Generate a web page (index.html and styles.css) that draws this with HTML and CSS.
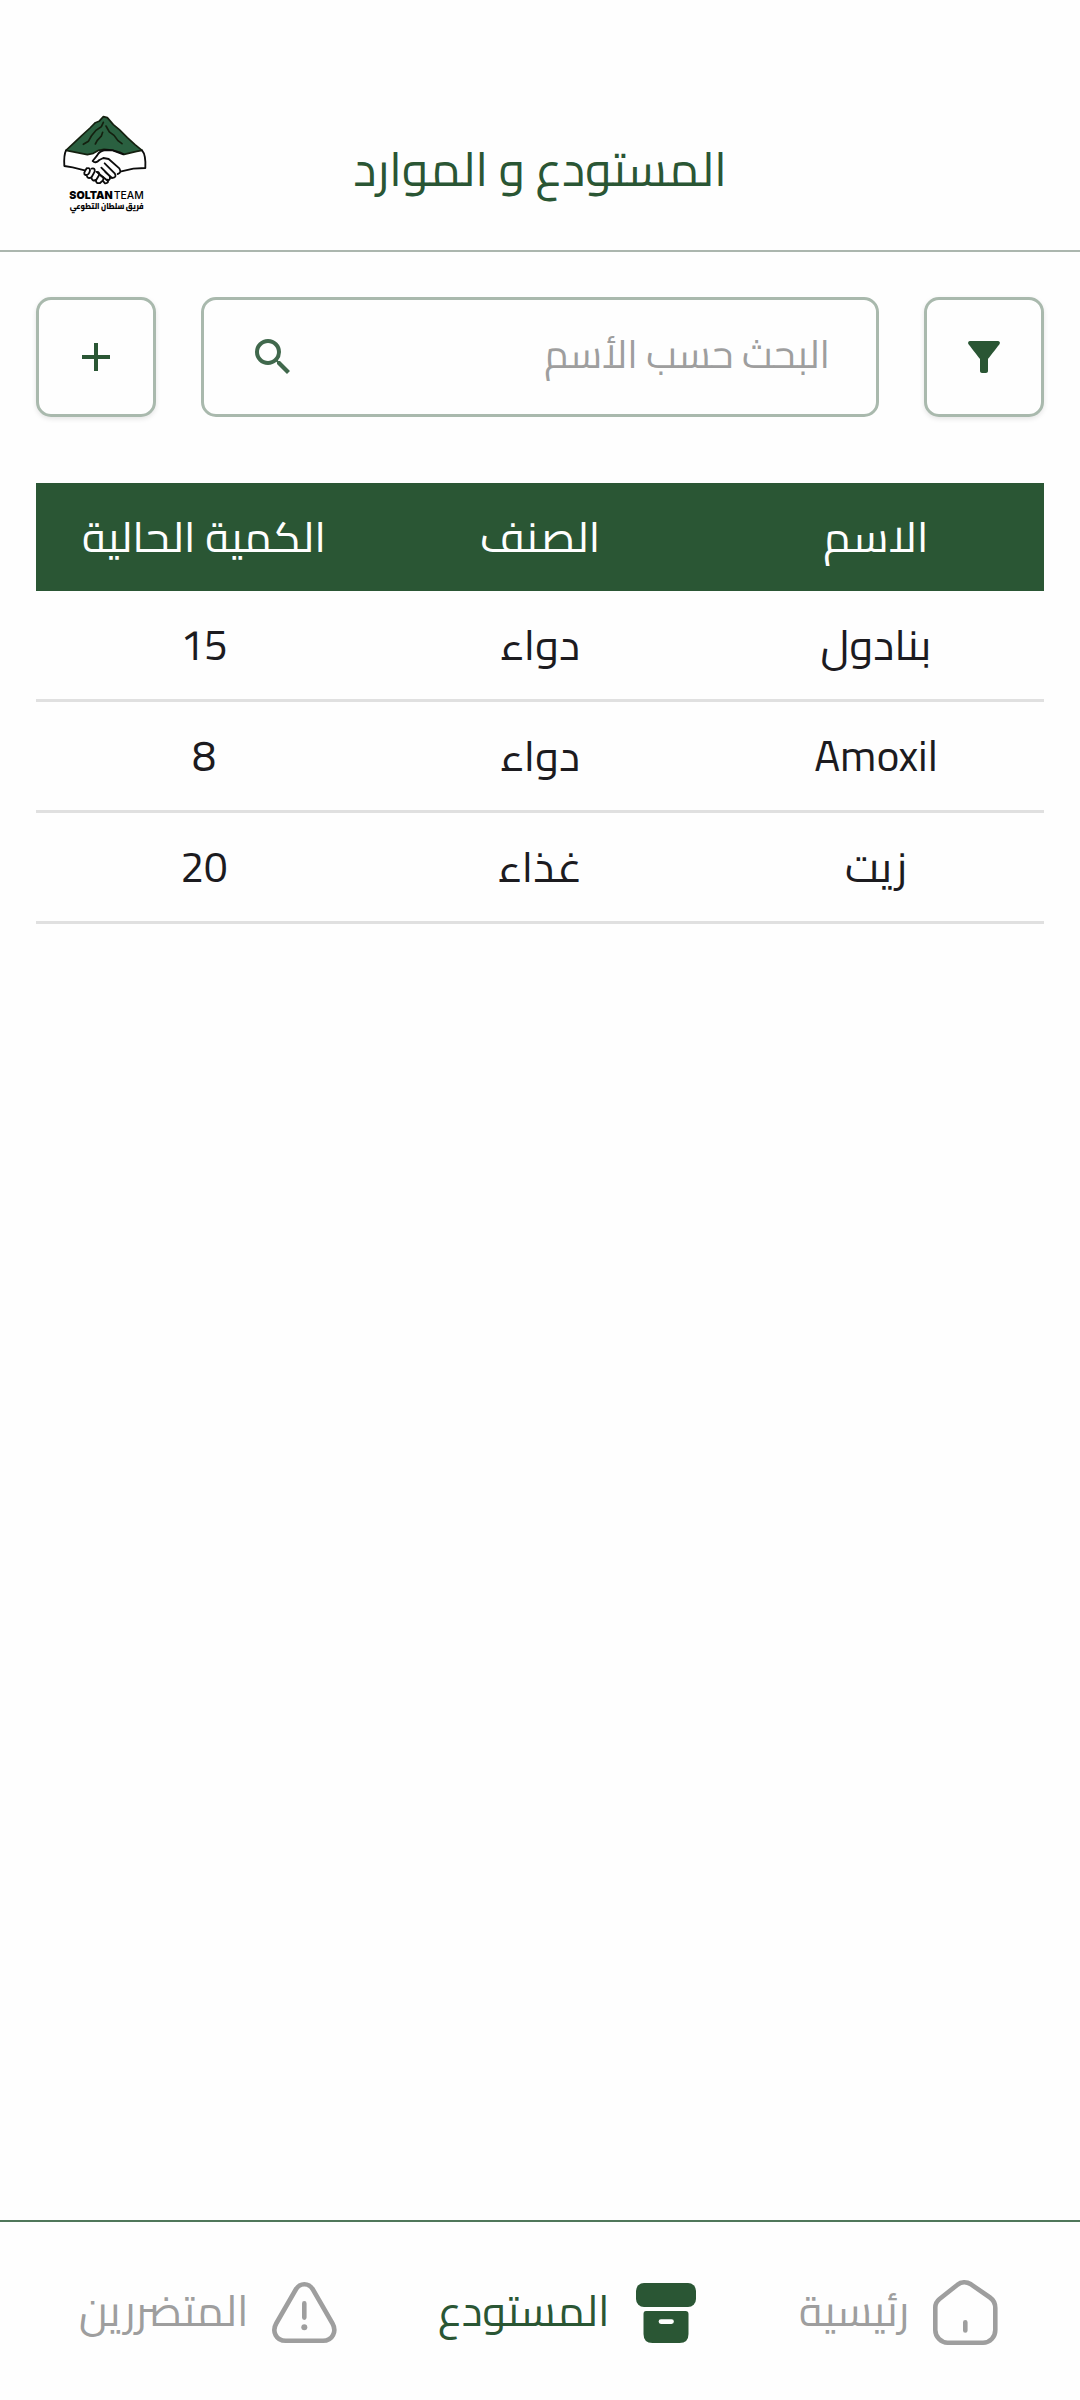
FILE: index.html
```html
<!DOCTYPE html>
<html lang="ar" dir="rtl">
<head>
<meta charset="utf-8">
<title>المستودع و الموارد</title>
<link rel="stylesheet" href="styles.css">
</head>
<body>
<div class="screen">
  <header class="app-bar">
    <h1 class="title">المستودع و الموارد</h1>
    <svg class="logo" viewBox="0 0 390 390" direction="ltr">
      <path class="logo-mountain" d="M78 151 L122 110 L150 84 L166 68 L177 64 L190 50 L202 53 L220 74 L238 89 L262 113 L285 134 L306 151 L290 154 L252 163 L240 157 L216 150 L192 148 L176 151 L160 160 L142 164 L112 158 Z"/>
      <path class="logo-line" d="M190 67 L184 80 L168 91 L154 108 L145 124 L130 133 M188 97 L184 108 L172 121 L166 132 M198 78 L208 96 L222 106 L234 122 L246 131"/>
      <path class="logo-hand" d="M78 151 Q71 165 73 198 L98 202 L134 211 M306 151 Q318 164 316 204 L280 206 L244 214 M158 183 L171 167 Q179 151 198 150 L218 151 L250 163 M158 183 Q166 192 178 180 L190 174 L206 177 L238 205 Q246 219 233 222 M194 190 L224 220 Q232 233 216 234 L196 216 M184 203 L209 228 Q213 241 201 241 L174 219"/>
      <path class="logo-hand" d="M140 205 Q149 202 150 211 Q147 226 137 225 Q127 222 140 205 M155 206 Q166 203 164 215 L155 231 Q143 239 140 226 M170 216 Q180 215 177 226 L169 239 Q157 246 154 233 M184 229 Q193 229 189 241 L180 249 Q167 252 168 240 M188 242 L195 250 Q207 251 203 239"/>
      <text class="logo-name" x="88" y="297" textLength="130" lengthAdjust="spacingAndGlyphs">SOLTAN</text>
      <text class="logo-team" x="221" y="297" textLength="90" lengthAdjust="spacingAndGlyphs">TEAM</text>
      <text class="logo-tag" x="200" y="326" text-anchor="middle" textLength="222" lengthAdjust="spacingAndGlyphs">فريق سلطان التطوعي</text>
    </svg>
  </header>

  <main class="content">
    <div class="toolbar">
      <button class="tool-button" aria-label="تصفية">
        <svg class="icon" viewBox="0 0 24 24"><path d="M4.25 5.61C6.27 8.2 10 13 10 13v6c0 .55.45 1 1 1h2c.55 0 1-.45 1-1v-6s3.72-4.8 5.74-7.39A.998.998 0 0 0 18.95 4H5.04c-.83 0-1.3.95-.79 1.61z"/></svg>
      </button>
      <div class="search">
        <span class="placeholder">البحث حسب الأسم</span>
        <svg class="icon icon-search" viewBox="0 0 24 24"><path d="M15.5 14h-.79l-.28-.27A6.471 6.471 0 0 0 16 9.5 6.5 6.5 0 1 0 9.5 16c1.61 0 3.09-.59 4.23-1.57l.27.28v.79l5 4.99L20.49 19l-4.99-5zm-6 0C7.01 14 5 11.99 5 9.5S7.01 5 9.5 5 14 7.01 14 9.5 11.99 14 9.5 14z"/></svg>
      </div>
      <button class="tool-button" aria-label="إضافة">
        <svg class="icon" viewBox="0 0 24 24"><path d="M19 13h-6v6h-2v-6H5v-2h6V5h2v6h6v2z"/></svg>
      </button>
    </div>

    <div class="table">
      <div class="row row-head"><span>الاسم</span><span>الصنف</span><span>الكمية الحالية</span></div>
      <div class="row"><span>بنادول</span><span>دواء</span><span class="num">15</span></div>
      <div class="row"><span>Amoxil</span><span>دواء</span><span class="num">8</span></div>
      <div class="row"><span>زيت</span><span>غذاء</span><span class="num">20</span></div>
    </div>
  </main>

  <nav class="tabs">
    <a class="tab">
      <svg class="tab-icon tab-icon-line" viewBox="0 0 65 65"><path d="M6.500 19L24.500 4.800C28 1.700 33.500 1.500 38 4.300L57 17.500C60.500 20 62.300 23.500 62.300 28V50C62.300 57 57 62.700 50 62.700H14.600C8 62.700 2.300 57 2.300 50V27.500C2.300 24 3.800 21.200 6.500 19ZM32.300 42.200V50.500"/></svg>
      <span>رئيسية</span>
    </a>
    <a class="tab tab-active">
      <svg class="tab-icon" viewBox="0 0 65 65"><rect x="3" y="3" width="60" height="24" rx="8"/><path fill-rule="evenodd" d="M13 31H52.500Q55.500 31 55.500 34V54Q55.500 63 46.500 63H19.500Q10.500 63 10.500 54V34Q10.500 31 13 31ZM28 39.200A2.400 2.400 0 0 0 28 44H38.500A2.400 2.400 0 0 0 38.500 39.200Z"/></svg>
      <span>المستودع</span>
    </a>
    <a class="tab">
      <svg class="tab-icon tab-icon-line" viewBox="0 -2 65 65"><path d="M23.800 7.500C28 .5 36.700 .5 40.900 7.500L60.500 41.500C65 49.500 60.500 58.800 51 58.800H13.700C4 58.800 -.3 49.500 4.200 41.500ZM32.300 21.400V35.600"/><circle class="dot" cx="32.300" cy="45.300" r="3"/></svg>
      <span>المتضررين</span>
    </a>
  </nav>
</div>
</body>
</html>
```
FILE: styles.css
```css
* { box-sizing: border-box; }

body {
  margin: 0;
  background: #fefefe;
  color: #1c1b1f;
  font-family: Cairo, "DejaVu Sans", sans-serif;
}

.screen {
  display: flex;
  flex-direction: column;
  height: 2400px;
}

.app-bar {
  display: grid;
  grid-template-columns: 130px 1fr 130px;
  align-items: start;
  height: 252px;
  padding: 100px 40px 0;
  border-bottom: 2px solid #abb6ae;
}

.title {
  grid-column: 2;
  margin: 23px 0 0;
  font-size: 48px;
  font-weight: 400;
  line-height: 90px;
  text-align: center;
  color: #2a5634;
}

.logo { width: 130px; height: 130px; }
.logo-mountain { fill: #2a6040; stroke: #14200f; stroke-width: 5; stroke-linejoin: round; }
.logo-line { fill: none; stroke: #14200f; stroke-width: 5; stroke-linecap: round; }
.logo-hand { fill: none; stroke: #0c0c0c; stroke-width: 5.500; stroke-linejoin: round; stroke-linecap: round; }
.logo-name { font: 900 33px Inter, sans-serif; }
.logo-team { font: 500 31px Inter, sans-serif; }
.logo-tag { font: 900 25px Cairo, sans-serif; }

.content { flex: 1; padding: 45px 36px 0; }

.toolbar { display: flex; gap: 45px; }

.tool-button,
.search {
  height: 120px;
  border: 3px solid #a9b9ad;
  border-radius: 15px;
  background: #fefefe;
}

.tool-button {
  display: grid;
  place-items: center;
  width: 120px;
  padding: 0;
  box-shadow: 0 2px 5px rgba(0, 0, 0, .1);
}

.search {
  display: flex;
  flex: 1;
  align-items: center;
  justify-content: space-between;
  padding: 0 46px 0 45px;
}

.placeholder {
  padding-bottom: 6px;
  font-size: 39px;
  line-height: 72px;
  color: #9e9e9e;
}

.icon { width: 48px; height: 48px; fill: #2a5634; }
.icon-search { fill: #40684c; }

.table { margin-top: 66px; font-size: 42px; line-height: 78px; }

.row {
  display: grid;
  grid-template-columns: repeat(3, 1fr);
  align-items: center;
  height: 111px;
  border-bottom: 3px solid #e0e0e0;
  text-align: center;
}

.row span { transform: scaleX(1.035); }
.row .num { transform: none; }

.row-head { height: 108px; border: 0; background: #2a5634; color: #fefefe; }
.row-head span { transform: scaleX(1.045); }

.tabs {
  display: flex;
  justify-content: space-between;
  height: 180px;
  padding: 58px 82px 0 79px;
  border-top: 2px solid #4f775a;
}

.tab {
  display: flex;
  align-items: flex-start;
  gap: 24px;
  font-size: 43px;
  line-height: 62px;
  color: #9e9e9e;
}

.tab-active { color: #2a5634; }
.tab-icon { width: 65px; height: 65px; fill: currentColor; }
.tab-icon-line { fill: none; stroke: currentColor; stroke-width: 4.600; stroke-linecap: round; stroke-linejoin: round; }
.dot { fill: currentColor; stroke: none; }
```
